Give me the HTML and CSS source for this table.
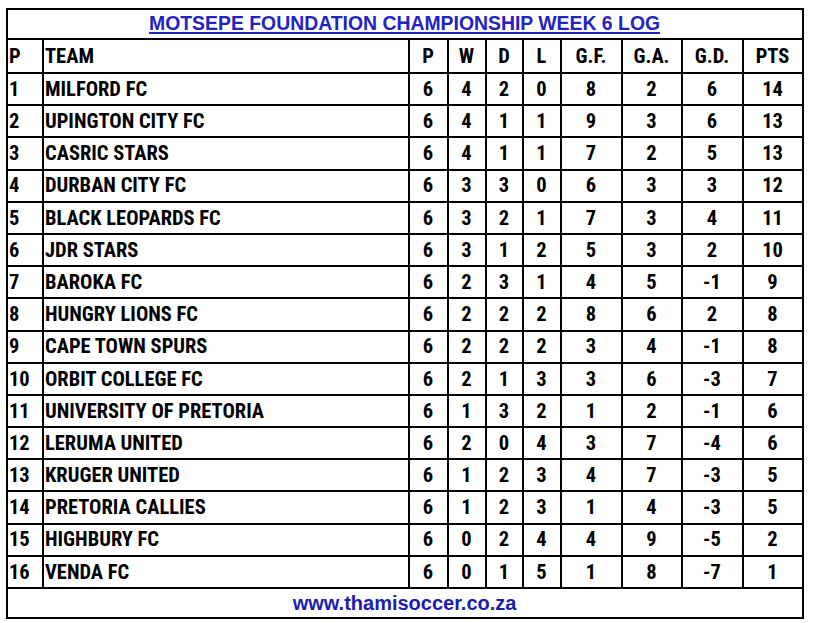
FILE: index.html
```html
<!DOCTYPE html>
<html lang="en">
<head>
<meta charset="utf-8">
<title>Motsepe Foundation Championship Week 6 Log</title>
<link rel="stylesheet" href="styles.css">
</head>
<body>
<table class="log">
  <colgroup>
    <col class="c-pos"><col class="c-team"><col class="c-p"><col class="c-w"><col class="c-d"><col class="c-l">
    <col class="c-gf"><col class="c-ga"><col class="c-gd"><col class="c-pts">
  </colgroup>
  <thead>
    <tr class="title-row"><th colspan="10" class="title"><span>MOTSEPE FOUNDATION CHAMPIONSHIP WEEK 6 LOG</span></th></tr>
    <tr class="head-row">
      <th class="left">P</th><th class="left">TEAM</th><th>P</th><th>W</th><th>D</th><th>L</th><th>G.F.</th><th>G.A.</th><th>G.D.</th><th>PTS</th>
    </tr>
  </thead>
  <tbody>
    <tr><td class="left">1</td><td class="left">MILFORD FC</td><td>6</td><td>4</td><td>2</td><td>0</td><td>8</td><td>2</td><td>6</td><td>14</td></tr>
    <tr><td class="left">2</td><td class="left">UPINGTON CITY FC</td><td>6</td><td>4</td><td>1</td><td>1</td><td>9</td><td>3</td><td>6</td><td>13</td></tr>
    <tr><td class="left">3</td><td class="left">CASRIC STARS</td><td>6</td><td>4</td><td>1</td><td>1</td><td>7</td><td>2</td><td>5</td><td>13</td></tr>
    <tr><td class="left">4</td><td class="left">DURBAN CITY FC</td><td>6</td><td>3</td><td>3</td><td>0</td><td>6</td><td>3</td><td>3</td><td>12</td></tr>
    <tr><td class="left">5</td><td class="left">BLACK LEOPARDS FC</td><td>6</td><td>3</td><td>2</td><td>1</td><td>7</td><td>3</td><td>4</td><td>11</td></tr>
    <tr><td class="left">6</td><td class="left">JDR STARS</td><td>6</td><td>3</td><td>1</td><td>2</td><td>5</td><td>3</td><td>2</td><td>10</td></tr>
    <tr><td class="left">7</td><td class="left">BAROKA FC</td><td>6</td><td>2</td><td>3</td><td>1</td><td>4</td><td>5</td><td>-1</td><td>9</td></tr>
    <tr><td class="left">8</td><td class="left">HUNGRY LIONS FC</td><td>6</td><td>2</td><td>2</td><td>2</td><td>8</td><td>6</td><td>2</td><td>8</td></tr>
    <tr><td class="left">9</td><td class="left">CAPE TOWN SPURS</td><td>6</td><td>2</td><td>2</td><td>2</td><td>3</td><td>4</td><td>-1</td><td>8</td></tr>
    <tr><td class="left">10</td><td class="left">ORBIT COLLEGE FC</td><td>6</td><td>2</td><td>1</td><td>3</td><td>3</td><td>6</td><td>-3</td><td>7</td></tr>
    <tr><td class="left">11</td><td class="left">UNIVERSITY OF PRETORIA</td><td>6</td><td>1</td><td>3</td><td>2</td><td>1</td><td>2</td><td>-1</td><td>6</td></tr>
    <tr><td class="left">12</td><td class="left">LERUMA UNITED</td><td>6</td><td>2</td><td>0</td><td>4</td><td>3</td><td>7</td><td>-4</td><td>6</td></tr>
    <tr><td class="left">13</td><td class="left">KRUGER UNITED</td><td>6</td><td>1</td><td>2</td><td>3</td><td>4</td><td>7</td><td>-3</td><td>5</td></tr>
    <tr><td class="left">14</td><td class="left">PRETORIA CALLIES</td><td>6</td><td>1</td><td>2</td><td>3</td><td>1</td><td>4</td><td>-3</td><td>5</td></tr>
    <tr><td class="left">15</td><td class="left">HIGHBURY FC</td><td>6</td><td>0</td><td>2</td><td>4</td><td>4</td><td>9</td><td>-5</td><td>2</td></tr>
    <tr><td class="left">16</td><td class="left">VENDA FC</td><td>6</td><td>0</td><td>1</td><td>5</td><td>1</td><td>8</td><td>-7</td><td>1</td></tr>
  </tbody>
  <tfoot>
    <tr class="foot-row"><td colspan="10" class="footer">www.thamisoccer.co.za</td></tr>
  </tfoot>
</table>
</body>
</html>
```

FILE: styles.css
```css
html, body {
  margin: 0;
  padding: 0;
  background: #ffffff;
}

body {
  padding: 8px 0 0 6px;
}

.log {
  border-collapse: collapse;
  table-layout: fixed;
  width: 798px;
  font-family: "Liberation Sans Narrow", "Roboto Condensed", "DejaVu Sans Condensed", "Liberation Sans", sans-serif;
  font-weight: bold;
  font-size: 20.5px;
  color: #000000;
}

.log th,
.log td {
  border: 2px solid #000000;
  padding: 0 2px 0 1px;
  text-align: center;
  vertical-align: middle;
  white-space: nowrap;
  overflow: hidden;
  font-weight: bold;
  line-height: 1;
}

.log .left {
  text-align: left;
}

.c-pos { width: 36px; }
.c-team { width: 366px; }
.c-p { width: 39px; }
.c-w { width: 38px; }
.c-d { width: 37px; }
.c-l { width: 38px; }
.c-gf { width: 61px; }
.c-ga { width: 60px; }
.c-gd { width: 61px; }
.c-pts { width: 60px; }

.title-row { height: 30px; }
.head-row { height: 34px; }
.log tbody tr { height: 32.2px; }
.foot-row { height: 30px; }

.title {
  font-family: "Liberation Sans", Arial, sans-serif;
  font-size: 19.4px;
  color: #2323c4;
}

.title span {
  text-decoration: underline;
  text-decoration-thickness: 2px;
  text-underline-offset: 2px;
}

.footer {
  font-family: "Liberation Sans", Arial, sans-serif;
  font-size: 20px;
  color: #1c1cae;
}
```
